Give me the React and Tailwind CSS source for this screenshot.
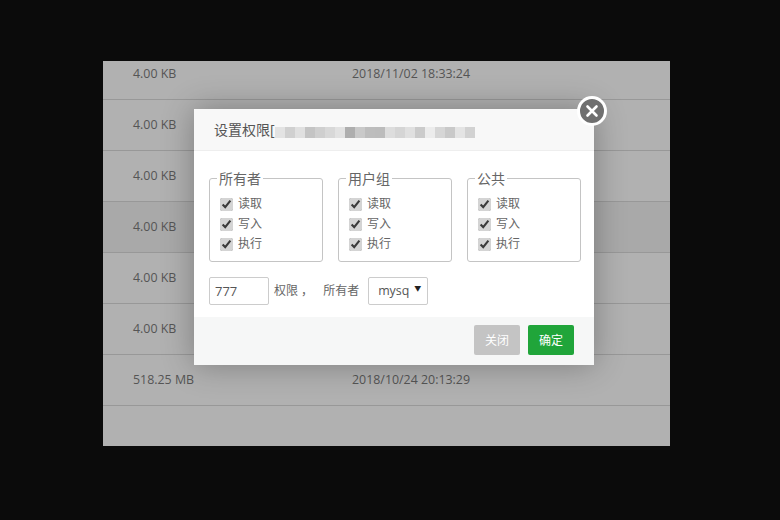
const rows = [
  { size: '4.00 KB', time: '2018/11/02 18:33:24' },
  { size: '4.00 KB', time: '' },
  { size: '4.00 KB', time: '' },
  { size: '4.00 KB', time: '', hover: true },
  { size: '4.00 KB', time: '' },
  { size: '4.00 KB', time: '' },
  { size: '518.25 MB', time: '2018/10/24 20:13:29' },
];

const mosaic = ['#e3e3e3', '#d0d0d0', '#e0e0e0', '#c4c4c4', '#cfcfcf', '#d8d8d8', '#e2e2e2', '#aeaeae', '#c9c9c9', '#bdbdbd', '#bcbcbc', '#dddddd', '#d5d5d5', '#e0e0e0', '#cbcbcb', '#ececec', '#d6d6d6', '#c9c9c9', '#e4e4e4', '#d2d2d2'];

const groups = ['所有者', '用户组', '公共'];
const perms = ['读取', '写入', '执行'];

const PermBox = ({ title }) => (
  <fieldset className="w-[114px] h-[93px] shrink-0 border border-[#c4c4c4] rounded-[3px] pl-[7px]">
    <legend className="px-[2px] text-[14px] leading-[19px] text-[#666]">{title}</legend>
    <div className="mt-[6px] pl-[3px] flex flex-col">
      {perms.map((p) => (
        <label key={p} className="h-5 flex items-center gap-[5px] text-[12px] text-[#666]">
          <input type="checkbox" defaultChecked className="w-[13px] h-[13px] m-0 accent-[#d4d4d4]" />
          {p}
        </label>
      ))}
    </div>
  </fieldset>
);

export default function App() {
  return (
    <div className="relative w-[780px] h-[520px] overflow-hidden bg-[#0b0b0b] pt-[61px] pl-[103px] font-['Open_Sans','Noto_Sans_CJK_SC',sans-serif]">
      <div className="w-[567px] h-[385px] bg-[#b1b1b1] overflow-hidden">
        <div className="-mt-[12px]">
          {rows.map((r, i) => (
            <div key={i} className={`h-[51px] flex items-center border-b border-[#989898] text-[12.4px] text-[#555] ${r.hover ? 'bg-[#a9a9a9]' : ''}`}>
              <span className="w-[249px] pl-[30px]">{r.size}</span>
              <span>{r.time}</span>
            </div>
          ))}
        </div>
      </div>

      {/* modal */}
      <div className="absolute left-[194px] top-[109px] w-[400px] h-[256px] bg-white flex flex-col shadow-[0_0_30px_rgba(0,0,0,0.3)]">
        <div className="h-[42px] shrink-0 bg-[#f8f8f8] border-b border-[#eeeeee] pl-5 pr-4 flex items-center text-[14px] text-[#555]">
          <span>设置权限[</span>
          <div className="flex mt-[5px]">
            {mosaic.map((c, i) => (
              <span key={i} className="w-[10px] h-[11px]" style={{ backgroundColor: c }} />
            ))}
          </div>
        </div>

        <div className="flex-1 px-[15px]">
          <div className="flex gap-[15px] mt-[18px]">
            {groups.map((g) => (
              <PermBox key={g} title={g} />
            ))}
          </div>
          <div className="mt-[15px] flex items-center text-[12px] text-[#666]">
            <input defaultValue="777" className="w-[60px] h-7 border border-[#cccccc] rounded-[2px] px-[5px] text-[13px] text-[#555] outline-none" />
            <span className="ml-[5px]">权限 ，</span>
            <span className="ml-[10px]">所有者</span>
            <div className="ml-[9px] w-[60px] h-7 border border-[#cccccc] rounded-[2px] pl-[9px] flex items-center gap-[5px] text-[12.4px] text-[#555]">
              <span>mysq</span>
              <span className="text-[7px] text-[#222] -mt-[3px]">▼</span>
            </div>
          </div>
        </div>

        <div className="h-[48px] shrink-0 bg-[#f6f7f7] pb-[2px] flex items-center justify-end gap-2 pr-5 text-[12px] text-white">
          <button className="w-[46px] h-[30px] pt-[1px] rounded-[2px] bg-[#c4c4c4]">关闭</button>
          <button className="w-[46px] h-[30px] pt-[1px] rounded-[2px] bg-[#20a53a]">确定</button>
        </div>

        <button className="absolute -right-[13px] -top-[13px] w-[30px] h-[30px] rounded-full bg-[#6f6f6f] border-[3px] border-white flex items-center justify-center">
          <svg width="14" height="14" viewBox="0 0 14 14" fill="none" stroke="white" strokeWidth="2.6" strokeLinecap="round">
            <path d="M2.5 2.5l9 9M11.5 2.5l-9 9" />
          </svg>
        </button>
      </div>
    </div>
  );
}
